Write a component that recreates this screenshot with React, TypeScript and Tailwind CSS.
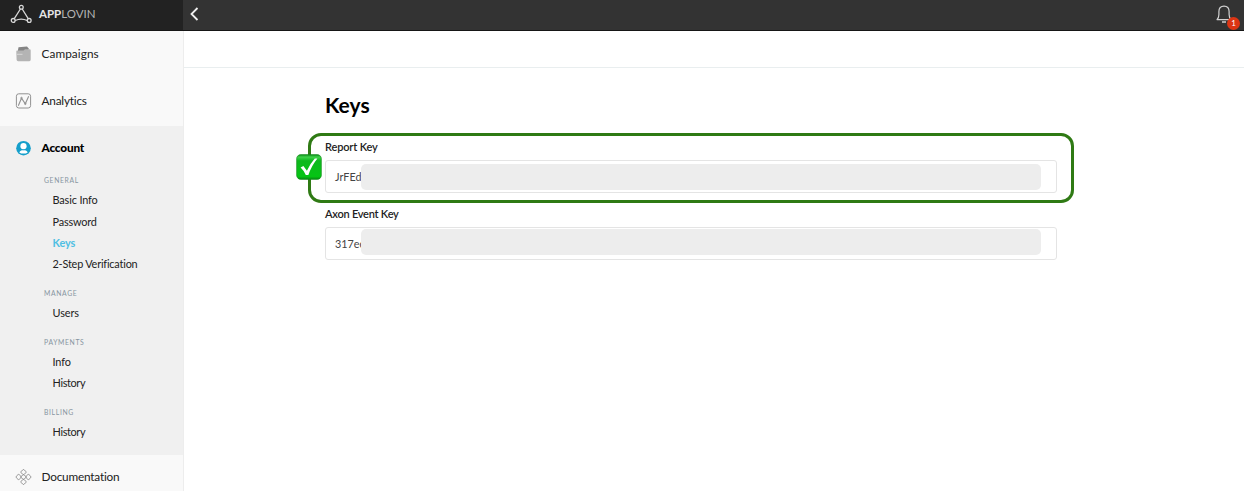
import React from "react";

function Logo() {
  return (
    <svg width="22" height="20" viewBox="0 0 22 20" fill="none" stroke="#d8d8d8" strokeWidth="1.3">
      <circle cx="11.3" cy="3.2" r="1.9" />
      <circle cx="3.2" cy="16.4" r="1.9" />
      <circle cx="19.2" cy="16.4" r="1.9" />
      <path d="M10.4 5 4.3 14.7M12.2 5 18.2 14.7M5.2 16.5Q11.2 13.6 17.2 16.5" />
    </svg>
  );
}

function CampaignsIcon() {
  return (
    <svg width="17" height="16" viewBox="-.5 0 17 16">
      <path d="M2.5 4 3 1.2 11.5.6 13 2.2V7H2.5z" fill="#858585" />
      <path d="M1.5 4.4H8l1.5-1.2h4.7q1 0 1 1v9.6q0 1.4-1.4 1.4H2.6q-1.4 0-1.5-1.4L.8 5.4q0-1 .7-1z" fill="#b4b4b4" />
      <path d="M1.5 8.3H7" stroke="#d8d8d8" strokeWidth="1" />
    </svg>
  );
}

function AnalyticsIcon() {
  return (
    <svg width="17" height="16" viewBox="-.5 0 17 16" fill="none" stroke="#929292">
      <rect x=".9" y=".8" width="14.2" height="14.2" rx="2.4" strokeWidth="1" />
      <path d="M2.8 12.8 6 5.2 9.8 10.8 13.2 3.2" strokeWidth="1.1" />
      <circle cx="6" cy="5" r=".8" strokeWidth=".8" />
      <circle cx="9.8" cy="10.8" r=".8" strokeWidth=".8" />
    </svg>
  );
}

function AccountIcon() {
  return (
    <svg width="17" height="16" viewBox="-.5 0 17 16">
      <circle cx="8" cy="8.2" r="7.3" fill="#159fcb" />
      <circle cx="8" cy="6.2" r="3.1" fill="#fff" />
      <path d="M3.8 12.4Q4.6 9.9 8 9.9t4.2 2.5Q10.4 13.6 8 13.6t-4.2-1.2z" fill="#fff" />
      <path d="M5.5 9.3Q8 10.7 10.5 9.3" stroke="#159fcb" strokeWidth=".7" fill="none" />
    </svg>
  );
}

function DocumentationIcon() {
  return (
    <svg width="17" height="16" viewBox="-.5 0 17 16" fill="none" stroke="#8d8d8d" strokeWidth=".9">
      <rect x="-2.1" y="-2.1" width="4.2" height="4.2" rx="1" transform="translate(8 3.1) rotate(45)" />
      <rect x="-2.1" y="-2.1" width="4.2" height="4.2" rx="1" transform="translate(3.1 8) rotate(45)" />
      <rect x="-2.1" y="-2.1" width="4.2" height="4.2" rx="1" transform="translate(12.9 8) rotate(45)" />
      <rect x="-2.1" y="-2.1" width="4.2" height="4.2" rx="1" transform="translate(8 12.9) rotate(45)" />
      <rect x="-2" y="-2" width="4" height="4" rx="1" transform="translate(8 8) rotate(45)" />
    </svg>
  );
}

function Bell() {
  return (
    <svg width="16" height="19" viewBox="0 0 16 19" fill="none" stroke="#d2d2d2" strokeWidth="1.2">
      <path d="M1 14.6Q2.9 12.6 2.9 9.4V6.6Q2.9 1.2 8 1.2t5.1 5.4v2.8q0 3.2 1.9 5.2z" strokeLinejoin="round" />
      <path d="M6 17h4" strokeWidth="1.5" />
    </svg>
  );
}

function CheckBadge() {
  return (
    <svg width="26" height="26" viewBox="0 0 26 26">
      <defs>
        <linearGradient id="badge" x1="0" y1="0" x2="0" y2="1">
          <stop offset="0" stopColor="#0a8a18" />
          <stop offset=".1" stopColor="#3fd24a" />
          <stop offset=".25" stopColor="#0db81d" />
          <stop offset=".88" stopColor="#05c514" />
          <stop offset="1" stopColor="#078a12" />
        </linearGradient>
      </defs>
      <rect x=".6" y=".6" width="24.8" height="24.8" rx="4.2" fill="url(#badge)" stroke="#1a8d20" strokeWidth=".6" />
      <path d="M4.6 13.6 7.4 12 10.9 16.8Q14.2 9.4 18.8 4.4l2.6.2Q15.4 12 12.4 21H9.8Q8 16.8 4.6 13.6z" fill="#fff" />
    </svg>
  );
}

function NavItem({ icon, label, className }: { icon: React.ReactNode; label: string; className: string }) {
  return (
    <div className={`flex shrink-0 items-center gap-[9.5px] pl-[15px] text-[11.8px] ${className}`}>
      {icon}
      <span>{label}</span>
    </div>
  );
}

const groups = [
  { title: "GENERAL", items: ["Basic Info", "Password", "Keys", "2-Step Verification"] },
  { title: "MANAGE", items: ["Users"] },
  { title: "PAYMENTS", items: ["Info", "History"] },
  { title: "BILLING", items: ["History"] },
];

const itemTracking: Record<string, string> = {
  "Basic Info": "tracking-[-0.13px]",
  Password: "tracking-[-0.2px]",
  Keys: "tracking-[-0.15px] font-bold text-[#4fbfe3]",
  "2-Step Verification": "tracking-[-0.2px]",
  Users: "tracking-[-0.1px]",
  Info: "tracking-[-0.1px]",
  History: "tracking-[-0.35px]",
};

function Field({ label, value, tracking, bar }: { label: string; value: string; tracking: string; bar: string }) {
  return (
    <div>
      <div className={`h-[14px] text-[11px] font-semibold leading-[14px] text-[#222] ${tracking}`}>{label}</div>
      <div className="relative mt-[6px] flex h-[33px] items-center rounded-[3px] border border-[#e4e4e4] pl-[9px] pt-px text-[10.8px] text-[#444]">
        {value}
        <div className={`absolute left-[35px] h-[26px] w-[680px] rounded-[5px] bg-[#ededed] ${bar}`} />
      </div>
    </div>
  );
}

export default function App() {
  return (
    <div className="flex h-[491px] w-[1244px] flex-col overflow-hidden bg-white font-['Lato',sans-serif] text-[#222] [font-variant-ligatures:none]">
      <header className="flex h-[31px] shrink-0 border-b border-[#161616] bg-[#333]">
        <div className="flex w-[183px] items-center bg-[#222] pl-[10px] pb-[2px]">
          <Logo />
          <div className="ml-[7px] pb-px text-[11.5px] text-[#b4b4b4]">
            <span className="font-bold text-[#e6e6e6]">APP</span>LOVIN
          </div>
        </div>
        <div className="flex flex-1 items-center justify-between pl-[7px] pr-[12px] pb-[2px]">
          <svg width="9" height="14" viewBox="0 0 9 14" fill="none" stroke="#f0f0f0" strokeWidth="1.8">
            <path d="M7.5 1 1.5 7l6 6" />
          </svg>
          <div className="relative">
            <Bell />
            <span className="absolute left-[11px] top-[12px] flex h-[13px] w-[13px] items-center justify-center rounded-full bg-[#dc3514] text-[8px] text-white">1</span>
          </div>
        </div>
      </header>
      <div className="flex min-h-0 flex-1">
        <nav className="flex w-[184px] shrink-0 flex-col overflow-hidden border-r border-[#ededed] bg-[#f9f9f9]">
          <NavItem icon={<CampaignsIcon />} label="Campaigns" className="h-[45px] tracking-[0.07px]" />
          <NavItem icon={<AnalyticsIcon />} label="Analytics" className="h-[50px] tracking-[-0.2px]" />
          <div className="flex h-[329px] shrink-0 flex-col bg-[#f0f0f0]">
            <NavItem icon={<AccountIcon />} label="Account" className="h-[44px] font-black tracking-[-0.18px] text-black" />
            <div className="flex flex-col gap-[7.5px]">
              {groups.map((g) => (
                <div key={g.title}>
                  <div className="flex h-[20px] items-center pl-[44px] text-[6.8px] tracking-[0.65px] text-[#8795a1]">{g.title}</div>
                  {g.items.map((item) => (
                    <div key={item} className={`flex h-[21.33px] items-center pl-[52.5px] text-[10.9px] ${itemTracking[item]}`}>
                      {item}
                    </div>
                  ))}
                </div>
              ))}
            </div>
          </div>
          <NavItem icon={<DocumentationIcon />} label="Documentation" className="h-[44px] tracking-[-0.2px]" />
        </nav>
        <main className="flex flex-1 flex-col">
          <div className="h-[37px] shrink-0 border-b border-[#e9eeef]" />
          <div className="w-[873px] pl-[141px] pt-[23px]">
            <h1 className="h-[28px] text-[21px] font-bold leading-[28px] text-black">Keys</h1>
            <div className="relative mt-[21px]">
              <Field label="Report Key" value="JrFEd" tracking="tracking-[-0.16px]" bar="top-[3px]" />
              <div className="pointer-events-none absolute left-[-17px] top-[-7px] h-[70px] w-[766px] rounded-[13px] border-[3px] border-[#2f7a14]" />
              <div className="absolute left-[-29px] top-[14px]">
                <CheckBadge />
              </div>
            </div>
            <div className="mt-[14px]">
              <Field label="Axon Event Key" value="317ec" tracking="tracking-[-0.24px]" bar="top-[1px]" />
            </div>
          </div>
        </main>
      </div>
    </div>
  );
}
